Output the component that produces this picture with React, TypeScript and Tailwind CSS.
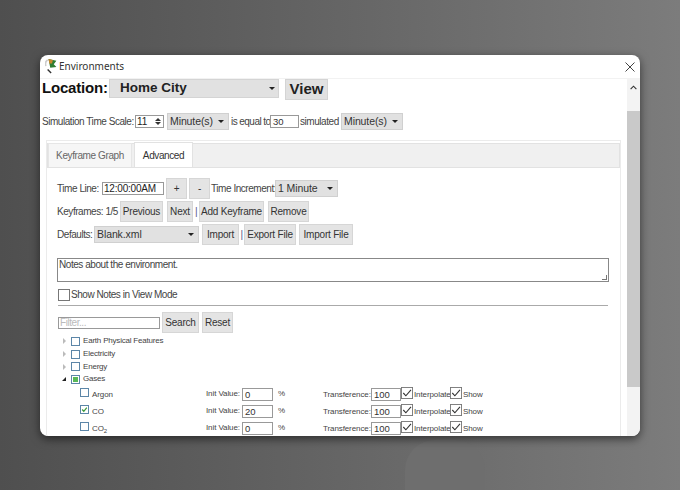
import React from "react";

const controlBtn =
  "h-[21px] bg-[#e4e4e4] border border-[#d6d6d6] text-[10px] tracking-[-0.2px] text-[#333] leading-none flex items-center justify-center shrink-0";

function Caret() {
  return <span className="w-0 h-0 border-x-[3px] border-x-transparent border-t-[3px] border-t-[#222] shrink-0" />;
}

function FakeSelect({ label, width }: { label: string; width: string }) {
  return (
    <div className={`${width} h-[17px] bg-[#e1e1e1] border border-[#d0d0d0] text-[10.5px] tracking-[-0.1px] text-[#333] flex items-center justify-between pl-[2px] pr-[4px] shrink-0`}>
      <span>{label}</span>
      <Caret />
    </div>
  );
}

function TextBox({ value, width }: { value: string; width: string }) {
  return (
    <div className={`${width} h-[13px] bg-white border border-[#999] text-[9.5px] tracking-normal text-[#333] leading-[11px] pl-[2px] shrink-0`}>{value}</div>
  );
}

function Check({ className }: { className: string }) {
  return (
    <svg viewBox="0 0 13 13" className={className}>
      <rect x="0.5" y="0.5" width="12" height="12" fill="#fff" stroke="#777" />
      <path d="M2.5 6.5 5.3 9.5 10.8 3.2" fill="none" stroke="#333" strokeWidth="1.2" />
    </svg>
  );
}

function TreeRow({ label, open, filled }: { label: string; open?: boolean; filled?: boolean }) {
  return (
    <div className="h-[12.7px] flex items-center text-[8px] tracking-[-0.2px] text-[#444]">
      {open ? (
        <span className="w-0 h-0 ml-[2px] mr-[5px] border-l-[4px] border-l-transparent border-b-[4px] border-b-[#222]" />
      ) : (
        <span className="w-0 h-0 ml-[3px] mr-[5px] border-y-[3px] border-y-transparent border-l-[3px] border-l-[#bbb]" />
      )}
      <span className="w-[9px] h-[9px] border border-[#5c86a8] bg-white flex items-center justify-center mr-[3px]">
        {filled && <span className="w-[5px] h-[5px] bg-[#58b858]" />}
      </span>
      <span>{label}</span>
    </div>
  );
}

function GasRow({ name, sub, init, checked }: { name: string; sub?: string; init: string; checked?: boolean }) {
  return (
    <div className="h-[17px] flex items-center text-[8px] tracking-[-0.1px] text-[#444]">
      <span className="w-[9px] h-[9px] border border-[#5c86a8] bg-white mt-[-3px] ml-[20px] flex items-center justify-center shrink-0">
        {checked && (
          <svg viewBox="0 0 9 9" className="w-[7px] h-[7px]">
            <path d="M1.5 4.5 3.6 6.8 7.5 2" fill="none" stroke="#3b9a3b" strokeWidth="1.6" />
          </svg>
        )}
      </span>
      <span className="w-[114px] ml-[3px] pt-[2px] shrink-0">
        {name}
        {sub && <sub className="text-[6px]">{sub}</sub>}
      </span>
      <span className="w-[36px] shrink-0">Init Value:</span>
      <TextBox value={init} width="w-[31px]" />
      <span className="ml-[5px] w-[45px] shrink-0">%</span>
      <span className="w-[48px] pt-[2px] shrink-0">Transference:</span>
      <TextBox value="100" width="w-[30px]" />
      <Check className="w-[12px] h-[12px] mt-[-2px] shrink-0" />
      <span className="w-[37px] pt-[2px] pl-[1px] shrink-0">Interpolate</span>
      <Check className="w-[12px] h-[12px] mt-[-2px] shrink-0" />
      <span className="ml-[1px] pt-[2px] shrink-0">Show</span>
    </div>
  );
}

export default function App() {
  return (
    <div className="relative w-[680px] h-[490px] overflow-hidden bg-gradient-to-r from-[#4f4f4f] to-[#7c7c7c] font-['Liberation_Sans',sans-serif] whitespace-nowrap flex items-start justify-center">
      {/* faint arch in the wallpaper */}
      <div className="absolute left-[405px] top-[440px] w-[80px] h-[60px] rounded-t-[30px] bg-[#6e6e6e]" />

      <div className="relative mt-[55px] w-[600px] h-[381px] bg-white rounded-[8px] overflow-hidden shadow-[0_3px_10px_rgba(0,0,0,0.55)] flex flex-col">
        <div className="h-[24px] border-b border-[#f2f2f2] flex items-center pl-[5px] pr-[5px] shrink-0">
          <svg viewBox="0 0 16 18" className="w-[14px] h-[16px] mb-[2px]">
            <path d="M3 13 7 17" stroke="#333" strokeWidth="1.6" />
            <path d="M1 9a6 6 0 0 1 2-7" stroke="#ccc" strokeWidth="2" fill="none" />
            <path d="M4 1 13 3 10 7 13 10 6 11Z" fill="#2f7d32" />
            <path d="M4 1 9 2 8 6 5 6Z" fill="#c8862a" />
          </svg>
          <span className="text-[10px] text-[#333] font-['Noto_Sans',sans-serif]">Environments</span>
          <svg viewBox="0 0 10 10" className="ml-auto w-[10px] h-[10px]">
            <path d="M.5.5l9 9M9.5.5l-9 9" stroke="#444" strokeWidth="1" />
          </svg>
        </div>

        <div className="flex flex-1 min-h-0">
          <div className="flex-1 min-w-0 overflow-hidden">
            <div className="h-[21px] flex items-start pl-[2px]">
              <span className="w-[67px] text-[15px] tracking-[-0.2px] leading-[18px] font-bold text-[#111]">Location:</span>
              <div className="w-[170px] h-[19px] bg-[#e1e1e1] border border-[#d4d4d4] flex items-center justify-between pl-[10px] pr-[3px] text-[13.5px] font-bold text-[#222]">
                <span>Home City</span>
                <Caret />
              </div>
              <div className="ml-[6px] w-[43px] h-[21px] bg-[#e1e1e1] border border-[#d4d4d4] flex items-center justify-center text-[15px] font-bold text-[#222]">View</div>
            </div>

            <div className="mt-[13px] h-[17px] flex items-center pl-[2px] text-[10px] text-[#444] tracking-[-0.45px]">
              <span className="w-[93px] shrink-0">Simulation Time Scale:</span>
              <div className="w-[29px] h-[13px] border border-[#999] text-[#222] tracking-normal leading-[11px] pl-[1px] flex items-center justify-between pr-[2px] shrink-0">
                <span>11</span>
                <span className="flex flex-col gap-[1px]">
                  <span className="w-0 h-0 border-x-[3px] border-x-transparent border-b-[3px] border-b-[#333]" />
                  <span className="w-0 h-0 border-x-[3px] border-x-transparent border-t-[3px] border-t-[#333]" />
                </span>
              </div>
              <div className="ml-[3px]"><FakeSelect label="Minute(s)" width="w-[62px]" /></div>
              <span className="ml-[2px] w-[39px] shrink-0 tracking-[-0.55px]">is equal to</span>
              <TextBox value="30" width="w-[29px]" />
              <span className="ml-[1px] w-[41px] shrink-0">simulated</span>
              <FakeSelect label="Minute(s)" width="w-[62px]" />
            </div>

            <div className="ml-[6px] mt-[10px] w-[575px] border border-[#ebebeb] border-b-0 pt-[2px]">
              <div className="h-[25px] bg-[#f0f0f0] border border-[#e2e2e2] flex items-end gap-[2px] text-[10px] tracking-[-0.4px]">
                <div className="w-[84px] h-[24px] bg-[#f6f6f6] border border-[#e6e6e6] border-b-0 flex items-center justify-center text-[#666]">Keyframe Graph</div>
                <div className="w-[59px] h-[25px] bg-white border border-[#e2e2e2] border-b-0 flex items-center justify-center text-[#333]">Advanced</div>
              </div>

              <div className="pl-[10px] text-[10px] tracking-[-0.45px] text-[#444]">
                <div className="mt-[10px] h-[21px] flex items-center">
                  <span className="w-[45px] shrink-0">Time Line:</span>
                  <div className="w-[62px] h-[13px] border border-[#999] text-[#222] text-[10px] tracking-[-0.2px] leading-[11px] pl-[1px] shrink-0">12:00:00AM</div>
                  <div className={`${controlBtn} ml-[2px] w-[21px]`}>+</div>
                  <div className={`${controlBtn} ml-[2px] w-[21px]`}>-</div>
                  <span className="ml-[1px] w-[64px] shrink-0">Time Increment:</span>
                  <FakeSelect label="1 Minute" width="w-[63px]" />
                </div>
                <div className="mt-[2px] h-[21px] flex items-center">
                  <span className="w-[63px] shrink-0">Keyframes: 1/5</span>
                  <div className={`${controlBtn} w-[43px]`}>Previous</div>
                  <div className={`${controlBtn} ml-[4px] w-[26px]`}>Next</div>
                  <span className="mx-[1px] w-[4px] text-center text-[#558]">|</span>
                  <div className={`${controlBtn} w-[65px]`}>Add Keyframe</div>
                  <div className={`${controlBtn} ml-[4px] w-[41px]`}>Remove</div>
                </div>
                <div className="mt-[2px] h-[21px] flex items-center">
                  <span className="w-[37px] shrink-0">Defaults:</span>
                  <FakeSelect label="Blank.xml" width="w-[105px]" />
                  <div className={`${controlBtn} ml-[3px] w-[37px]`}>Import</div>
                  <span className="mx-[1px] w-[3px] text-center text-[#558]">|</span>
                  <div className={`${controlBtn} w-[52px]`}>Export File</div>
                  <div className={`${controlBtn} ml-[3px] w-[54px]`}>Import File</div>
                </div>

                <div className="relative mt-[13px] w-[552px] h-[24px] border border-[#888] pl-[1px] leading-[12px] text-[#444]">
                  Notes about the environment.
                  <span className="absolute right-[1px] bottom-[1px] w-[5px] h-[5px] border-r border-b border-[#777]" />
                </div>

                <div className="mt-[6px] h-[13px] flex items-center ml-[1px]">
                  <span className="w-[12px] h-[12px] border border-[#777] mr-[1px]" />
                  <span className="text-[#444]">Show Notes in View Mode</span>
                </div>
                <div className="mt-[4px] w-[550px] h-px bg-[#aaa] ml-[1px]" />

                <div className="mt-[6px] h-[21px] flex items-center ml-[1px]">
                  <div className="w-[102px] h-[12px] border border-[#999] text-[10px] text-[#bbb] leading-[10px] pl-[1px]">Filter...</div>
                  <div className={`${controlBtn} ml-[2px] w-[37px]`}>Search</div>
                  <div className={`${controlBtn} ml-[3px] w-[31px]`}>Reset</div>
                </div>

                <div className="ml-[3px] mt-[2px]">
                  <TreeRow label="Earth Physical Features" />
                  <TreeRow label="Electricity" />
                  <TreeRow label="Energy" />
                  <TreeRow label="Gases" open filled />
                  <div>
                    <GasRow name="Argon" init="0" />
                    <GasRow name="CO" init="20" checked />
                    <GasRow name="CO" sub="2" init="0" />
                  </div>
                </div>
              </div>
            </div>
          </div>

          <div className="w-[13px] bg-[#f3f3f3] flex flex-col shrink-0">
            <div className="h-[32px] flex justify-center pt-[6px]">
              <svg viewBox="0 0 8 5" className="w-[7px] h-[5px]">
                <path d="M.7 4.3 4 1l3.3 3.3" fill="none" stroke="#333" strokeWidth="1.3" />
              </svg>
            </div>
            <div className="h-[276px] bg-[#c9c9c9]" />
          </div>
        </div>
      </div>
    </div>
  );
}
